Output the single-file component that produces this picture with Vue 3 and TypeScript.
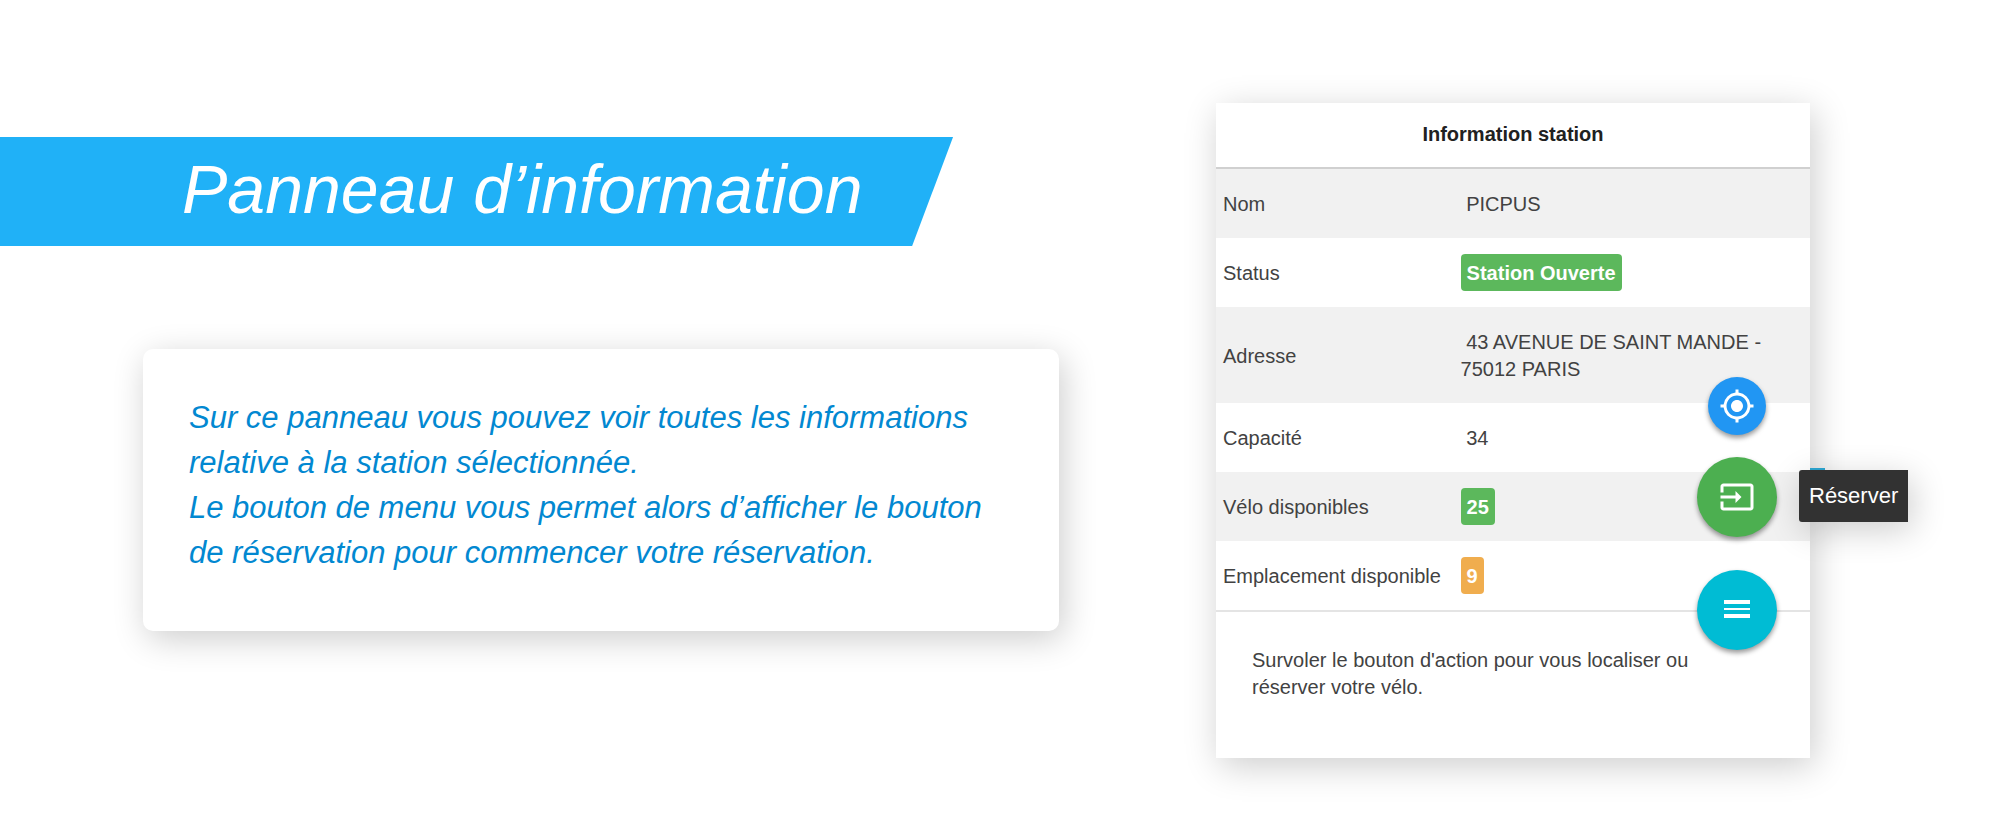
<script setup lang="ts">
type Tone = 'success' | 'warning'

interface StationRow {
  label: string
  value: string
  badge?: Tone
}

const rows: StationRow[] = [
  { label: 'Nom', value: 'PICPUS' },
  { label: 'Status', value: 'Station Ouverte', badge: 'success' },
  { label: 'Adresse', value: '43 AVENUE DE SAINT MANDE - 75012 PARIS' },
  { label: 'Capacité', value: '34' },
  { label: 'Vélo disponibles', value: '25', badge: 'success' },
  { label: 'Emplacement disponible', value: '9', badge: 'warning' },
]
</script>

<template>
  <main class="page">
    <section class="intro">
      <h1 class="banner">Panneau d’information</h1>
      <div class="card">
        <p>Sur ce panneau vous pouvez voir toutes les informations relative à la station sélectionnée.</p>
        <p>Le bouton de menu vous permet alors d’afficher le bouton de réservation pour commencer votre réservation.</p>
      </div>
    </section>

    <aside class="panel">
      <table class="station">
        <colgroup>
          <col class="label-col" />
          <col />
        </colgroup>
        <thead>
          <tr>
            <th colspan="2" scope="colgroup">Information station</th>
          </tr>
        </thead>
        <tbody>
          <tr v-for="row in rows" :key="row.label">
            <th scope="row">{{ row.label }}</th>
            <td>
              <span v-if="row.badge" class="badge" :class="row.badge">{{ row.value }}</span>
              <template v-else>&nbsp;{{ row.value }}</template>
            </td>
          </tr>
        </tbody>
      </table>
      <p class="hint">Survoler le bouton d'action pour vous localiser ou réserver votre vélo.</p>

      <div class="actions">
        <button class="fab small locate" type="button" aria-label="Me localiser">
          <svg viewBox="0 0 24 24" width="36" height="36" aria-hidden="true">
            <path d="M12 8c-2.210 0-4 1.790-4 4s1.790 4 4 4 4-1.790 4-4-1.790-4-4-4zm8.940 3A8.994 8.994 0 0 0 13 3.060V1h-2v2.060A8.994 8.994 0 0 0 3.060 11H1v2h2.060A8.994 8.994 0 0 0 11 20.940V23h2v-2.060A8.994 8.994 0 0 0 20.940 13H23v-2h-2.060zM12 19c-3.870 0-7-3.130-7-7s3.130-7 7-7 7 3.130 7 7-3.130 7-7 7z" />
          </svg>
        </button>
        <div class="reserve-group">
          <button class="fab reserve" type="button" aria-label="Réserver" aria-describedby="reserve-tip">
            <svg viewBox="0 0 24 24" width="36" height="36" aria-hidden="true">
              <path d="M21 3.010H3c-1.100 0-2 .9-2 2V9h2V4.990h18v14.030H3V15H1v4.010c0 1.100.9 1.980 2 1.980h18c1.100 0 2-.88 2-1.980v-14c0-1.110-.9-2-2-2zM11 16l4-4-4-4v3H1v2h10v3z" />
            </svg>
          </button>
          <span id="reserve-tip" class="tooltip" role="tooltip">Réserver</span>
        </div>
        <button class="fab menu" type="button" aria-label="Menu">
          <svg viewBox="0 0 36 36" width="36" height="36" aria-hidden="true">
            <path d="M5 8h26v4H5zM5 16h26v2H5zM5 22h26v4H5z" />
          </svg>
        </button>
      </div>
    </aside>
  </main>
</template>

<style>
body {
  margin: 0;
  background: #fff;
}
</style>

<style scoped>
.page {
  display: flex;
  align-items: flex-start;
  justify-content: space-between;
  box-sizing: border-box;
  min-height: 100vh;
  padding: 103px 190px 75px 0;
  overflow: hidden;
  font-family: "Liberation Sans", Arial, sans-serif;
}

.intro {
  width: 1059px;
  max-width: 60%;
  padding-top: 34px;
}

.banner {
  box-sizing: border-box;
  width: 90%;
  margin: 0;
  padding: 13px 0 18px 182px;
  background: #20b1f7;
  clip-path: polygon(0 0, 100% 0, calc(100% - 41px) 100%, 0 100%);
  color: #fff;
  font-size: 68px;
  font-style: italic;
  font-weight: 400;
  line-height: 78px;
  white-space: nowrap;
}

.card {
  margin: 103px 0 0 143px;
  padding: 46px 46px 56px;
  border-radius: 10px;
  background: #fff;
  box-shadow: 4px 8px 34px rgba(0, 0, 0, 0.2);
  color: #0288d1;
  font-size: 31px;
  font-style: italic;
  line-height: 45px;
}

.card p {
  margin: 0;
}

.panel {
  position: relative;
  width: 594px;
  background: #fff;
  box-shadow: 4px 8px 34px rgba(0, 0, 0, 0.2);
  color: #424242;
  font-size: 20px;
  line-height: 27px;
}

.station {
  width: 100%;
  border-collapse: collapse;
  table-layout: fixed;
  border-bottom: 2px solid #e4e4e4;
}

.label-col {
  width: 40%;
}

.station thead th {
  padding: 18px 7px 19px;
  border-bottom: 2px solid #d0d0d0;
  color: #212121;
  font-weight: 700;
  text-align: center;
}

.station tbody th,
.station td {
  box-sizing: border-box;
  height: 69px;
  padding: 22px 7px 20px;
  font-weight: 400;
  text-align: left;
  vertical-align: middle;
}

.station tbody th {
  white-space: nowrap;
}

.station td {
  padding-right: 32px;
}

.station tbody tr:nth-child(odd) {
  background: #f1f1f1;
}

.badge {
  display: inline-block;
  margin: -6px 0;
  padding: 6px 6px 4px;
  border-radius: 4px;
  color: #fff;
  font-weight: 700;
}

.success {
  background: #5cb85c;
}

.warning {
  background: #f0ad4e;
}

.hint {
  margin: 0;
  padding: 35px 90px 57px 36px;
}

.actions {
  position: absolute;
  right: 33px;
  bottom: 108px;
  display: flex;
  flex-direction: column;
  align-items: center;
}

.fab {
  display: flex;
  align-items: center;
  justify-content: center;
  width: 80px;
  height: 80px;
  padding: 0;
  border: 0;
  border-radius: 50%;
  box-shadow: 0 3px 5px rgba(0, 0, 0, 0.4);
  color: #fff;
  cursor: pointer;
}

.fab svg {
  fill: currentColor;
}

.small {
  width: 58px;
  height: 58px;
}

.locate {
  background: #2196f3;
}

.reserve-group {
  position: relative;
  margin: 22px 0 33px;
}

.reserve {
  background: #4caf50;
}

.menu {
  background: #00bcd4;
}

.tooltip {
  position: absolute;
  top: 13px;
  left: 102px;
  padding: 12px 10px;
  border-radius: 3px 0 0 3px;
  background: #323232;
  box-shadow: 4px 8px 34px rgba(0, 0, 0, 0.2);
  color: #fff;
  font-size: 22px;
  line-height: 28px;
}

.tooltip::before {
  position: absolute;
  top: -2px;
  left: 11px;
  width: 15px;
  height: 2px;
  background: #2a9fc9;
  content: "";
}
</style>
